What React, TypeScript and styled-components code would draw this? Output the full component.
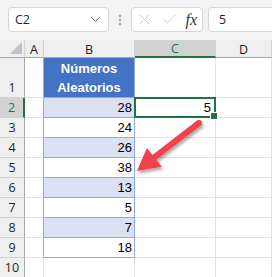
import React from "react";
import styled, { createGlobalStyle, css } from "styled-components";
import { ChevronDown, EllipsisVertical, X, Check } from "lucide-react";

const GREEN = "#217346";
const TABLE_LINE = "#8ea9db";

const GlobalStyle = createGlobalStyle`
  html, body {
    margin: 0;
    padding: 0;
    background: #ffffff;
    overflow: hidden;
  }
  * {
    box-sizing: border-box;
  }
`;

const values = [28, 24, 26, 38, 13, 5, 7, 18];

const App = () => {
  return (
    <>
      <GlobalStyle />
      <Page>
        <Toolbar>
          <NameBox>
            <span>C2</span>
            <ChevronDown size={15} strokeWidth={1.6} color="#555" />
          </NameBox>
          <Grip>
            <EllipsisVertical size={14} strokeWidth={2.4} color="#a8a8a8" />
          </Grip>
          <FormulaButtons>
            <X size={17} strokeWidth={1.2} color="#c4c4c4" />
            <Check size={17} strokeWidth={1.2} color="#c4c4c4" />
            <Fx>fx</Fx>
          </FormulaButtons>
          <FormulaInput>5</FormulaInput>
        </Toolbar>

        <Sheet>
          <Corner />
          <ColHeader>A</ColHeader>
          <ColHeader $table>B</ColHeader>
          <ColHeader $active>C</ColHeader>
          <ColHeader>D</ColHeader>

          <RowHeader $bottom>1</RowHeader>
          <Cell $tableEdge />
          <TitleCell>
            Números
            <br />
            Aleatorios
          </TitleCell>
          <Cell />
          <Cell />

          {values.map((v, i) => (
            <React.Fragment key={i}>
              <RowHeader $active={i === 0}>{i + 2}</RowHeader>
              <Cell $tableEdge />
              <NumCell $band={i % 2 === 0}>{v}</NumCell>
              {i === 0 ? <SelectedCell>5</SelectedCell> : <Cell />}
              <Cell />
            </React.Fragment>
          ))}

          <RowHeader>10</RowHeader>
          <Cell />
          <Cell />
          <Cell />
          <Cell />
        </Sheet>

        <Arrow viewBox="0 0 272 277" width={272} height={277}>
          <defs>
            <filter id="shadow" x="-20%" y="-20%" width="140%" height="140%">
              <feDropShadow dx="1.5" dy="2.5" stdDeviation="1.6" floodColor="#000" floodOpacity="0.35" />
            </filter>
          </defs>
          <g filter="url(#shadow)" fill="#f0434c">
            <polygon points="197.1,120.6 152.4,155 146.9,148 137,171 161.7,166.8 156.2,159.8 200.9,125.4" />
            <circle cx="199" cy="123" r="3.05" />
          </g>
        </Arrow>
      </Page>
    </>
  );
};

const Page = styled.div`
  position: relative;
  width: 272px;
  height: 277px;
  overflow: hidden;
  font-family: "Liberation Sans", Arial, sans-serif;
`;

const Toolbar = styled.div`
  display: flex;
  align-items: flex-start;
  height: 40px;
  padding: 7px 0 0 8px;
  background: #f3f3f3;
  overflow: hidden;
`;

const boxStyle = css`
  height: 25px;
  background: #ffffff;
  border: 1px solid #d6d6d6;
  border-radius: 4px;
  display: flex;
  align-items: center;
`;

const NameBox = styled.div`
  ${boxStyle};
  width: 101px;
  padding: 0 5px 0 6px;
  justify-content: space-between;
  font-family: "Open Sans", "Noto Sans", sans-serif;
  font-size: 12.5px;
  color: #1b1f3a;
`;

const Grip = styled.div`
  width: 22px;
  height: 25px;
  display: flex;
  align-items: center;
  justify-content: center;
`;

const FormulaButtons = styled.div`
  ${boxStyle};
  width: 72px;
  padding: 0 3px 0 4px;
  justify-content: space-between;
`;

const Fx = styled.span`
  font-family: "Liberation Serif", "Times New Roman", serif;
  font-style: italic;
  font-size: 16px;
  color: #333;
  padding-right: 2px;
`;

const FormulaInput = styled.div`
  ${boxStyle};
  flex: 1;
  margin-left: 5px;
  margin-right: -8px;
  padding-left: 10px;
  font-family: "Open Sans", "Noto Sans", sans-serif;
  font-size: 12.5px;
  color: #1b1f3a;
`;

const Sheet = styled.div`
  display: grid;
  grid-template-columns: 25px 19px 91px 81px 56px;
  grid-template-rows: 18px 40px repeat(9, 20px);
  background: #ffffff;
`;

const headerText = css`
  font-family: "Open Sans", "Noto Sans", sans-serif;
  font-size: 12.5px;
  color: #1f1f1f;
`;

const Corner = styled.div`
  position: relative;
  background: #efefef;
  border-right: 1px solid #d2d2d2;
  border-bottom: 1px solid #a6a6a6;

  &::after {
    content: "";
    position: absolute;
    right: 2px;
    bottom: 3px;
    width: 12px;
    height: 12px;
    background: #c3c3c3;
    clip-path: polygon(100% 0, 100% 100%, 0 100%);
  }
`;

const ColHeader = styled.div<{ $active?: boolean; $table?: boolean }>`
  ${headerText};
  display: flex;
  align-items: center;
  justify-content: center;
  padding-top: 1px;
  background: ${({ $active }) => ($active ? "#d2d2d2" : "#efefef")};
  color: ${({ $active }) => ($active ? GREEN : "#1f1f1f")};
  border-right: 1px solid #d2d2d2;
  border-bottom: ${({ $active, $table }) =>
    $active ? `2px solid ${GREEN}` : $table ? `1px solid ${TABLE_LINE}` : "1px solid #a6a6a6"};
`;

const RowHeader = styled.div<{ $active?: boolean; $bottom?: boolean }>`
  ${headerText};
  display: flex;
  align-items: ${({ $bottom }) => ($bottom ? "flex-end" : "center")};
  justify-content: center;
  padding-bottom: ${({ $bottom }) => ($bottom ? "1px" : "0")};
  background: ${({ $active }) => ($active ? "#d2d2d2" : "#efefef")};
  color: ${({ $active }) => ($active ? GREEN : "#1f1f1f")};
  border-bottom: 1px solid #d2d2d2;
  border-right: ${({ $active }) => ($active ? `2px solid ${GREEN}` : "1px solid #a6a6a6")};
`;

const Cell = styled.div<{ $tableEdge?: boolean }>`
  border-right: 1px solid ${({ $tableEdge }) => ($tableEdge ? TABLE_LINE : "#e1e1e1")};
  border-bottom: 1px solid #e1e1e1;
`;

const TitleCell = styled.div`
  display: flex;
  align-items: center;
  justify-content: center;
  text-align: center;
  background: #4472c4;
  color: #ffffff;
  font-weight: bold;
  font-size: 13px;
  line-height: 19px;
  border-right: 1px solid ${TABLE_LINE};
  border-bottom: 1px solid ${TABLE_LINE};
`;

const NumCell = styled.div<{ $band?: boolean }>`
  display: flex;
  align-items: center;
  justify-content: flex-end;
  padding-right: 2px;
  font-size: 13px;
  color: #000;
  background: ${({ $band }) => ($band ? "#d9e1f2" : "#ffffff")};
  border-right: 1px solid ${TABLE_LINE};
  border-bottom: 1px solid ${TABLE_LINE};
`;

const SelectedCell = styled.div`
  position: relative;
  z-index: 1;
  display: flex;
  align-items: center;
  justify-content: flex-end;
  padding-right: 3px;
  font-size: 13px;
  color: #000;
  margin: -1px 0 0 -1px;
  border: 2px solid ${GREEN};

  &::after {
    content: "";
    position: absolute;
    right: -4px;
    bottom: -4px;
    width: 6px;
    height: 6px;
    background: ${GREEN};
    border: 1px solid #ffffff;
  }
`;

const Arrow = styled.svg`
  position: absolute;
  left: 0;
  top: 0;
  pointer-events: none;
  z-index: 2;
`;

export default App;
